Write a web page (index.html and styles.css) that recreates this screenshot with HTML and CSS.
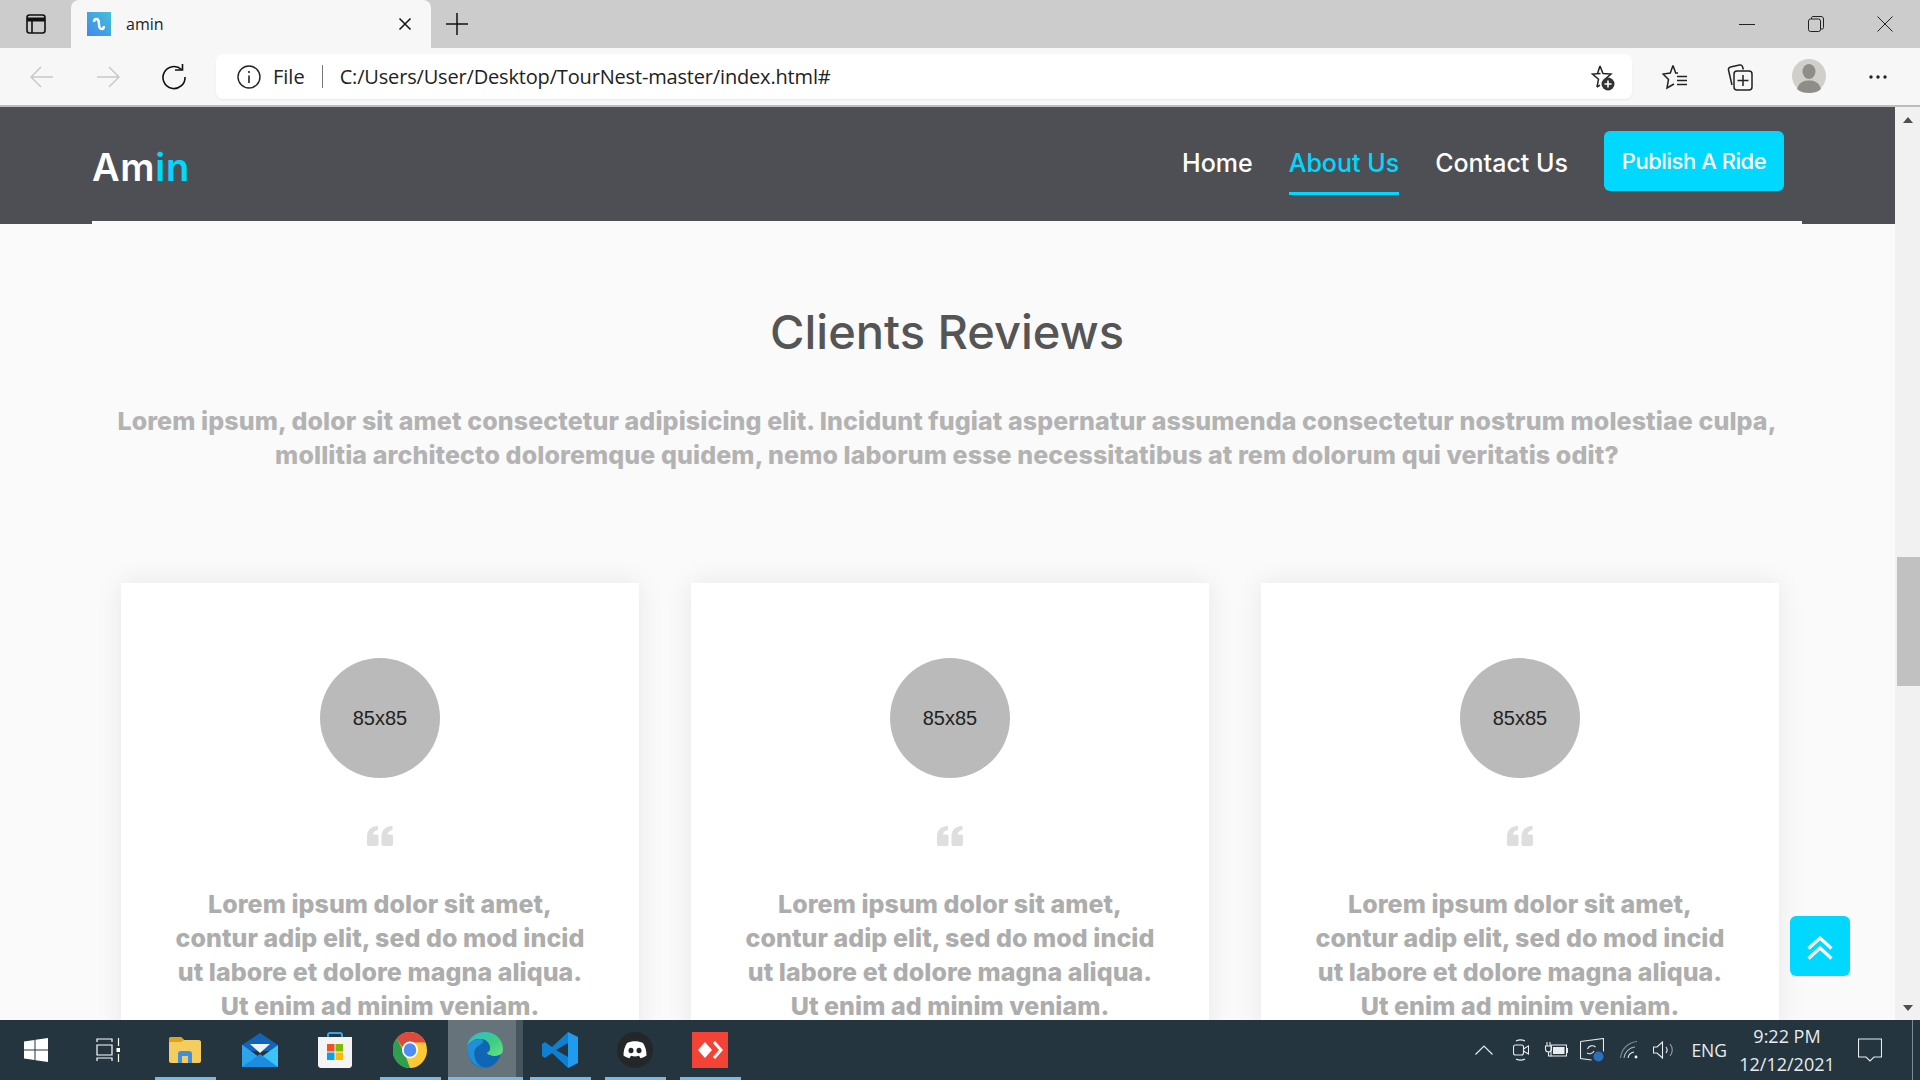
FILE: index.html
```html
<!DOCTYPE html>
<html>
<head>
    <meta charset="utf-8">
    <title>amin</title>
    <link rel="stylesheet" href="styles.css">
</head>
<body>
    <div class="tabbar">
        <div class="tab-side">
            <svg width="20" height="20" viewBox="0 0 20 20" fill="none" stroke="#111" stroke-width="1.6"><rect x="1" y="1" width="18" height="18" rx="2.5"/><path d="M1 5.5h18" stroke-width="4"/><path d="M6 6v13"/></svg>
        </div>
        <div class="tab">
            <svg class="favicon" width="24" height="24" viewBox="0 0 24 24"><defs><linearGradient id="fav" x1="1" y1="0" x2="0" y2="1"><stop offset="0" stop-color="#45c1d6"/><stop offset="1" stop-color="#4287ee"/></linearGradient></defs><rect width="24" height="24" fill="url(#fav)"/><path d="M7 10c0-4 4.500-4 4.800 0l.4 4c.3 4 4.800 4 4.800 0" fill="none" stroke="#fff" stroke-width="2.400"/></svg>
            <span class="tab-title">amin</span>
            <svg class="tab-close" width="14" height="14" viewBox="0 0 14 14" stroke="#111" stroke-width="1.500"><path d="M1.500 1.500l11 11M12.500 1.500l-11 11"/></svg>
        </div>
        <svg class="tab-new" width="22" height="22" viewBox="0 0 22 22" stroke="#111" stroke-width="1.500"><path d="M11 0v22M0 11h22"/></svg>
        <div class="win-controls">
            <svg width="16" height="16" viewBox="0 0 16 16" stroke="#222" stroke-width="1"><path d="M0 8.500h16"/></svg>
            <svg width="16" height="16" viewBox="0 0 16 16" fill="none" stroke="#222" stroke-width="1"><rect x=".5" y="3" width="12" height="12.500" rx="2"/><path d="M3.500 3V2c0-1 .7-1.500 1.500-1.500h8c1.400 0 2.500 1 2.500 2.500v8.500c0 1-.5 1.500-1.500 1.500h-1"/></svg>
            <svg width="16" height="16" viewBox="0 0 16 16" stroke="#222" stroke-width="1"><path d="M.5.500l15 15M15.500.500l-15 15"/></svg>
        </div>
    </div>

    <div class="toolbar">
        <svg class="tool-back" width="24" height="24" viewBox="0 0 24 24" fill="none" stroke="#c9c9c9" stroke-width="1.500"><path d="M1 12h22M11 2L1 12l10 10"/></svg>
        <svg class="tool-forward" width="24" height="24" viewBox="0 0 24 24" fill="none" stroke="#c9c9c9" stroke-width="1.500"><path d="M1 12h22M13 2l10 10-10 10"/></svg>
        <svg class="tool-reload" width="26" height="26" viewBox="0 0 26 26" fill="none" stroke="#111" stroke-width="1.600"><path d="M20.500 5.500A11 11 0 1 0 24 13"/><path d="M14 6h7.500V-1"/></svg>
        <div class="address">
            <svg width="24" height="24" viewBox="0 0 24 24" fill="none" stroke="#222" stroke-width="1.400"><circle cx="12" cy="12" r="11"/><path d="M12 10.500v7.500" stroke-width="1.600"/><circle cx="12" cy="7" r="1.100" fill="#222" stroke="none"/></svg>
            <span class="addr-file">File</span>
            <span class="addr-sep"></span>
            <span class="addr-url">C:/Users/User/Desktop/TourNest-master/index.html#</span>
            <svg class="addr-star" width="28" height="28" viewBox="0 0 28 28" fill="none" stroke="#222" stroke-width="1.500"><path d="M12 3l3 7.500 8 .6-6 5.200 1 4M9 24l1.500-7.700-6-5.200 8-.6"/><path d="M12 3L9.500 10.500M9 24l3-1.800"/><circle cx="20" cy="21" r="6.500" fill="#333" stroke="none"/><path d="M20 17.500v7M16.500 21h7" stroke="#fff" stroke-width="1.600"/></svg>
        </div>
        <div class="tool-icons">
            <svg width="26" height="28" viewBox="0 0 26 28" fill="none" stroke="#222" stroke-width="1.500"><path d="M11 2.500l2.700 7.500H16M11 2.500L8.300 10 1 11l5.500 5.500L5 25l7-4"/><path d="M15 13.500h10M15 17.500h10M15 21.500h10"/></svg>
            <svg width="26" height="30" viewBox="0 0 26 30" fill="none" stroke="#222" stroke-width="1.500"><path d="M5 23L1.500 8c-.3-1.500.5-2.500 2-3l9-2c1.500-.3 2.500.3 3 1.500l.8 3"/><rect x="7" y="9" width="18" height="19" rx="3"/><path d="M16 13v11M10.500 18.500h11"/></svg>
            <svg class="tool-avatar" width="34" height="34" viewBox="0 0 34 34"><circle cx="17" cy="17" r="17" fill="#d0cfca"/><ellipse cx="17" cy="12.500" rx="6.500" ry="7.500" fill="#8f8d89"/><path d="M5 30c2-7 7-8.500 12-8.500S27 23 29 30c-3 3-8 4-12 4s-9-1-12-4z" fill="#8f8d89"/></svg>
            <svg width="20" height="6" viewBox="0 0 20 6" fill="#222"><circle cx="3" cy="3" r="1.700"/><circle cx="10" cy="3" r="1.700"/><circle cx="17" cy="3" r="1.700"/></svg>
        </div>
    </div>

    <div class="viewport">
        <div class="page">
            <header class="site-header">
                <a class="logo">Am<span>in</span></a>
                <nav class="nav">
                    <a class="nav-link">Home</a>
                    <a class="nav-link active">About Us</a>
                    <a class="nav-link">Contact Us</a>
                    <a class="nav-btn">Publish A Ride</a>
                </nav>
            </header>

            <section class="reviews">
                <h2>Clients Reviews</h2>
                <p class="reviews-lead">Lorem ipsum, dolor sit amet consectetur adipisicing elit. Incidunt fugiat aspernatur assumenda consectetur nostrum molestiae culpa,<br>mollitia architecto doloremque quidem, nemo laborum esse necessitatibus at rem dolorum qui veritatis odit?</p>

                <div class="cards">
                    <div class="card">
                        <div class="avatar">85x85</div>
                        <svg class="quote" width="26" height="20" viewBox="0 0 26 20" fill="#dedede"><path d="M0 10.500C0 5 3 1 9.500 0L11 0v4C8 4.500 6.500 6 6 8.500h3.500c1.300 0 2 .7 2 2V18c0 1.300-.7 2-2 2H2c-1.300 0-2-.7-2-2z"/><path d="M14.500 10.500c0-5.500 3-9.500 9.500-10.500l1.500 0v4c-3 .5-4.500 2-5 4.500H24c1.300 0 2 .7 2 2V18c0 1.300-.7 2-2 2h-7.500c-1.300 0-2-.7-2-2z"/></svg>
                        <p>Lorem ipsum dolor sit amet,<br>contur adip elit, sed do mod incid<br>ut labore et dolore magna aliqua.<br>Ut enim ad minim veniam.</p>
                    </div>
                    <div class="card">
                        <div class="avatar">85x85</div>
                        <svg class="quote" width="26" height="20" viewBox="0 0 26 20" fill="#dedede"><path d="M0 10.500C0 5 3 1 9.500 0L11 0v4C8 4.500 6.500 6 6 8.500h3.500c1.300 0 2 .7 2 2V18c0 1.300-.7 2-2 2H2c-1.300 0-2-.7-2-2z"/><path d="M14.500 10.500c0-5.500 3-9.500 9.500-10.500l1.500 0v4c-3 .5-4.500 2-5 4.500H24c1.300 0 2 .7 2 2V18c0 1.300-.7 2-2 2h-7.500c-1.300 0-2-.7-2-2z"/></svg>
                        <p>Lorem ipsum dolor sit amet,<br>contur adip elit, sed do mod incid<br>ut labore et dolore magna aliqua.<br>Ut enim ad minim veniam.</p>
                    </div>
                    <div class="card">
                        <div class="avatar">85x85</div>
                        <svg class="quote" width="26" height="20" viewBox="0 0 26 20" fill="#dedede"><path d="M0 10.500C0 5 3 1 9.500 0L11 0v4C8 4.500 6.500 6 6 8.500h3.500c1.300 0 2 .7 2 2V18c0 1.300-.7 2-2 2H2c-1.300 0-2-.7-2-2z"/><path d="M14.500 10.500c0-5.500 3-9.500 9.500-10.500l1.500 0v4c-3 .5-4.500 2-5 4.500H24c1.300 0 2 .7 2 2V18c0 1.300-.7 2-2 2h-7.500c-1.300 0-2-.7-2-2z"/></svg>
                        <p>Lorem ipsum dolor sit amet,<br>contur adip elit, sed do mod incid<br>ut labore et dolore magna aliqua.<br>Ut enim ad minim veniam.</p>
                    </div>
                </div>
            </section>

            <a class="to-top">
                <svg width="26" height="24" viewBox="0 0 26 24" fill="none" stroke="#fff" stroke-width="3.200"><path d="M1.500 12.500L13 2l11.500 10.500M1.500 22.500L13 12l11.500 10.500"/></svg>
            </a>
        </div>
        <div class="scrollbar">
            <span class="arrow-up"></span>
            <div class="scroll-track"><div class="scroll-thumb"></div></div>
            <span class="arrow-down"></span>
        </div>
    </div>

    <div class="taskbar">
        <div class="task-sys">
            <svg width="24" height="24" viewBox="0 0 24 24" fill="#fff"><path d="M0 3.500l10.500-1.500v9.500H0zM11.500 1.800L24 0v11.500H11.500zM0 12.500h10.500V22L0 20.500zM11.500 12.500H24V24l-12.500-1.800z"/></svg>
        </div>
        <div class="task-sys">
            <svg width="24" height="24" viewBox="0 0 24 24" fill="none" stroke="#fff" stroke-width="1.200"><path d="M1 4V1h15v3M1 7h15v10H1zM1 23v-3h15v3M22.500 0v8M22.500 16v8"/><rect x="20.500" y="10" width="3.500" height="4" fill="#fff" stroke="none"/></svg>
        </div>
        <div class="task-app running">
            <svg width="32" height="26" viewBox="0 0 32 26"><path d="M0 2c0-1 1-2 2-2h10l3 3h15c1 0 2 1 2 2v19c0 1-1 2-2 2H2c-1 0-2-1-2-2z" fill="#f5cd5f"/><path d="M0 2c0-1 1-2 2-2h10l3 3-3 2H0z" fill="#e0a21c"/><path d="M9 26V17c0-2 1-3 3-3h8c2 0 3 1 3 3v9h-4v-7h-6v7z" fill="#3f8fdc"/></svg>
        </div>
        <div class="task-app">
            <svg width="36" height="34" viewBox="0 0 36 34"><path d="M0 12L18 0l18 12v6H0z" fill="#1065b8"/><path d="M8 11h20l-10 9z" fill="#eef2f5"/><path d="M36 12v22H0V12l18 13z" fill="#3cc4f5"/><path d="M0 12l18 13-18 9z" fill="#2ca5ee"/><path d="M0 34l18-13 18 13z" fill="#1b8ce0"/></svg>
        </div>
        <div class="task-app">
            <svg width="36" height="36" viewBox="0 0 36 36"><path d="M11 6V3c0-1 1-2 2-2h10c1 0 2 1 2 2v3" fill="none" stroke="#3aa3e3" stroke-width="2"/><path d="M1 5h34v28c0 1.500-1 3-3 3H4c-2 0-3-1.500-3-3z" fill="#f4f4f4"/><rect x="10" y="12" width="7.500" height="7.500" fill="#f25022"/><rect x="18.500" y="12" width="7.500" height="7.500" fill="#7fba00"/><rect x="10" y="20.500" width="7.500" height="7.500" fill="#00a4ef"/><rect x="18.500" y="20.500" width="7.500" height="7.500" fill="#ffb900"/></svg>
        </div>
        <div class="task-app running">
            <svg width="34" height="36" viewBox="0 0 34 34" preserveAspectRatio="none"><circle cx="17" cy="17" r="17" fill="#fcc934"/><path d="M17 0a17 17 0 0 1 15.500 10H17a7 7 0 0 0-6.800 5.500L3.500 6A17 17 0 0 1 17 0z" fill="#dd4a3d"/><path d="M3.500 6l8 13.500L17 34A17 17 0 0 1 3.500 6z" fill="#2f9e4f"/><circle cx="17" cy="17" r="8" fill="#fff"/><circle cx="17" cy="17" r="6.300" fill="#4f8df5"/></svg>
        </div>
        <div class="task-app active">
            <svg width="36" height="36" viewBox="0 0 36 36"><defs><linearGradient id="edge" x1="0" y1="0" x2="1" y2="1"><stop offset="0" stop-color="#2fb8dc"/><stop offset=".6" stop-color="#3fd07c"/><stop offset="1" stop-color="#6ce08a"/></linearGradient></defs><path d="M18 0c10 0 18 7 18 17 0 5-4 7-8 7-5 0-8-2-8-3 0-1 3-1 3-5 0-5-4-9-10-9C7 7 2 10 0 15 1 6 9 0 18 0z" fill="url(#edge)"/><path d="M0 15c2-5 7-8 13-8 6 0 10 4 10 9 0 4-3 4-3 5 0 1 3 3 8 3 3 0 5-1 6-2-3 9-10 14-17 14C8 36 0 28 0 15z" fill="#0f66b4"/><path d="M13 13c-5 2-7 7-5 13 1 5 5 9 11 10C9 36 0 28 0 15c2-5 7-8 13-8 2 0 6 2 0 6z" fill="#1f8fd8"/></svg>
            <span class="task-split"></span>
        </div>
        <div class="task-app running">
            <svg width="36" height="36" viewBox="0 0 36 36"><path d="M26 0l10 5v26l-10 5z" fill="#1f9cf0"/><path d="M26 0L10 15 3 10 0 12v12l3 2 7-5 16 15V25L14 18l12-7z" fill="#0f7fcf"/></svg>
        </div>
        <div class="task-app running">
            <svg width="36" height="36" viewBox="0 0 36 36"><circle cx="18" cy="18" r="18" fill="#23272a"/><path d="M10 11c5-2.500 11-2.500 16 0 2.500 4 3.500 8 3.500 12.500-2 1.500-4 2.300-6 2.700l-1.500-2.500c-3 1-5 1-8 0l-1.500 2.500c-2-.4-4-1.200-6-2.700C6.500 19 7.500 15 10 11z" fill="#fff"/><ellipse cx="14" cy="18.500" rx="2.500" ry="2.800" fill="#23272a"/><ellipse cx="22" cy="18.500" rx="2.500" ry="2.800" fill="#23272a"/></svg>
        </div>
        <div class="task-app running">
            <svg width="36" height="36" viewBox="0 0 36 36"><rect width="36" height="36" fill="#f44336"/><path d="M13 10l7 8-7 8-7-8z" fill="#fff"/><path d="M22 10l7 8-7 8" fill="none" stroke="#fff" stroke-width="3"/></svg>
        </div>

        <div class="tray">
            <svg class="tray-chevron" width="18" height="10" viewBox="0 0 18 10" fill="none" stroke="#e8ecee" stroke-width="1.200"><path d="M.5 9.500L9 1l8.500 8.500"/></svg>
            <svg class="tray-cam" width="16" height="22" viewBox="0 0 16 22" fill="none" stroke="#e8ecee" stroke-width="1.100"><rect x=".5" y="6" width="10" height="10" rx="2"/><path d="M10.500 10l5-3v8l-5-3M3 2c3-1.500 6-1.500 9 0M3 20c3 1.500 6 1.500 9 0"/></svg>
            <svg class="tray-batt" width="24" height="16" viewBox="0 0 24 16"><path d="M3 0v4M6 0v4M1.500 4h6v3c0 2-1.500 3-3 3s-3-1-3-3zM4.500 10v4h3" fill="none" stroke="#e8ecee" stroke-width="1.100"/><rect x="7" y="3" width="15.500" height="11" fill="none" stroke="#e8ecee"/><rect x="9" y="5" width="11.500" height="7" fill="#e8ecee"/><rect x="22.500" y="6" width="1.500" height="5" fill="#e8ecee"/></svg>
            <svg class="tray-sync" width="24" height="24" viewBox="0 0 24 24" fill="none" stroke="#e8ecee" stroke-width="1.100"><path d="M.5 3.500L23.500.500v13M.5 3.500v17l11 1.500"/><path d="M7.500 11a5 5 0 0 1 8-2M14 13a5 5 0 0 1-7 2"/><circle cx="18.500" cy="18.500" r="5" fill="#2d6fbd" stroke="none"/></svg>
            <svg class="tray-wifi" width="18" height="18" viewBox="0 0 18 18" fill="none" stroke="#aab3b8" stroke-width="1.100"><path d="M.5 17C1.500 8 8 1.500 17 .5" stroke="#7f8a90"/><path d="M4 17c.8-6 5.500-10.500 11-11"/><path d="M8 17c.5-3 3-5.500 6-6" stroke="#e8ecee"/><circle cx="16" cy="16" r="1.400" fill="#fff" stroke="none"/></svg>
            <svg class="tray-sound" width="22" height="18" viewBox="0 0 22 18" fill="none" stroke="#e8ecee" stroke-width="1.100"><path d="M.5 6v6h3.500l5.500 5V1L4 6z"/><path d="M13 6c1.500 2 1.500 4 0 6"/><path d="M17 3c3 3.500 3 8.500 0 12" stroke="#99a3a8"/></svg>
            <span class="tray-lang">ENG</span>
            <div class="tray-clock"><span>9:22 PM</span><span>12/12/2021</span></div>
            <svg class="tray-notify" width="24" height="24" viewBox="0 0 24 24" fill="none" stroke="#e8ecee" stroke-width="1.100"><path d="M.5 1h23v18H16l-4 4-4-4H.5z"/></svg>
        </div>
    </div>
</body>
</html>
```

FILE: styles.css
```css
* {
    margin: 0;
    padding: 0;
    box-sizing: border-box;
}

html, body {
    height: 100%;
    overflow: hidden;
}

body {
    display: flex;
    flex-direction: column;
    font-family: "Open Sans", "Liberation Sans", sans-serif;
    background: #fafafa;
}

/* browser chrome */
.tabbar {
    height: 48px;
    flex: none;
    background: #cccccc;
    display: flex;
    align-items: center;
}

.tab-side {
    width: 71px;
    display: flex;
    justify-content: center;
}

.tab {
    width: 360px;
    height: 48px;
    background: #f7f7f7;
    border-radius: 8px 8px 0 0;
    display: flex;
    align-items: center;
    padding-left: 16px;
}

.tab-title {
    font-size: 16px;
    color: #222;
    margin-left: 15px;
    flex: 1;
}

.tab-close {
    margin-right: 19px;
}

.tab-new {
    margin-left: 15px;
}

.win-controls {
    margin-left: auto;
    display: flex;
    gap: 53px;
    padding-right: 27px;
}

.toolbar {
    height: 59px;
    flex: none;
    background: #f7f7f7;
    border-bottom: 2px solid #bdbdbd;
    display: flex;
    align-items: center;
    padding: 0 32px 0 30px;
}

.tool-back {
    margin-right: 42px;
}

.tool-forward {
    margin-right: 41px;
}

.address {
    width: 1416px;
    height: 45px;
    margin-left: 29px;
    background: #fff;
    border-radius: 7px;
    box-shadow: 0 1px 2px rgba(0, 0, 0, 0.06);
    display: flex;
    align-items: center;
    padding: 0 16px 0 21px;
}

.addr-file {
    font-size: 20px;
    color: #222;
    margin-left: 12px;
}

.addr-sep {
    width: 1px;
    height: 23px;
    background: #777;
    margin: 0 17px;
}

.addr-url {
    font-size: 20px;
    color: #222;
    letter-spacing: -0.17px;
    flex: 1;
}

.tool-icons {
    flex: 1;
    display: flex;
    align-items: center;
    justify-content: space-between;
    padding-left: 30px;
}

.tool-avatar {
    margin: 0 3px 2px 0;
}

/* page */
.viewport {
    flex: 1;
    display: flex;
    min-height: 0;
}

.page {
    flex: 1;
    min-width: 0;
    position: relative;
    overflow: hidden;
    background: #fafafa;
}

.site-header {
    height: 117px;
    background: #4e4f55;
    padding: 0 93px 0 92px;
    display: flex;
    align-items: flex-start;
    justify-content: space-between;
    position: relative;
}

/* the pale strip under the header stops short of both page edges */
.site-header::after {
    content: "";
    position: absolute;
    left: 92px;
    right: 93px;
    bottom: 0;
    height: 3px;
    background: #fafafa;
}

.logo {
    font-family: "Inter", sans-serif;
    font-size: 38px;
    font-weight: 600;
    color: #fff;
    margin-top: 38px;
    line-height: 44px;
    letter-spacing: 0.7px;
}

.logo span {
    color: #00d8ff;
}

.nav {
    display: flex;
    align-items: flex-start;
    padding-right: 18px;
}

.nav-link {
    font-family: "Inter", sans-serif;
    font-size: 25px;
    font-weight: 500;
    color: #fff;
    height: 88px;
    line-height: 36px;
    padding-top: 38px;
    margin-right: 36px;
    border-bottom: 3px solid transparent;
}

.nav-link.active {
    color: #00d8ff;
    border-bottom-color: #00d8ff;
}

.nav-btn {
    font-family: "Inter", sans-serif;
    font-size: 22px;
    font-weight: 500;
    color: #fff;
    background: #00d8ff;
    border-radius: 6px;
    width: 180px;
    height: 60px;
    margin-top: 24px;
    display: flex;
    align-items: center;
    justify-content: center;
    letter-spacing: -0.45px;
}

.reviews {
    padding: 0 116px 0 121px;
    text-align: center;
}

.reviews h2 {
    font-family: "Inter", sans-serif;
    font-size: 47px;
    font-weight: 500;
    color: #555555;
    margin: 78px 6px 0 0;
    line-height: 60px;
}

.reviews-lead {
    font-family: "Inter", sans-serif;
    font-size: 25px;
    font-weight: 800;
    color: #b3b3b3;
    line-height: 34px;
    margin: 42px -17px 0 -23px;
    white-space: nowrap;
    letter-spacing: 0.1px;
}

.cards {
    display: flex;
    justify-content: space-between;
    margin-top: 111px;
}

.card {
    width: 518px;
    height: 600px;
    background: #fff;
    box-shadow: 0 0 25px rgba(0, 0, 0, 0.08);
    display: flex;
    flex-direction: column;
    align-items: center;
    padding-top: 75px;
}

.avatar {
    width: 120px;
    height: 120px;
    border-radius: 50%;
    background: #bababa;
    color: #222;
    font-family: "Liberation Sans", Arial, sans-serif;
    font-size: 20px;
    display: flex;
    align-items: center;
    justify-content: center;
}

.quote {
    margin-top: 48px;
}

.card p {
    font-family: "Inter", sans-serif;
    font-size: 25px;
    font-weight: 800;
    color: #adadad;
    line-height: 34px;
    text-align: center;
    margin-top: 41px;
    white-space: nowrap;
    letter-spacing: 0.05px;
}

.to-top {
    position: absolute;
    left: 1790px;
    top: 809px;
    width: 60px;
    height: 60px;
    background: #00d8ff;
    border-radius: 6px;
    display: flex;
    align-items: center;
    justify-content: center;
    padding-top: 3px;
}

.scrollbar {
    width: 25px;
    flex: none;
    background: #f1f1f1;
    display: flex;
    flex-direction: column;
    align-items: center;
}

.arrow-up, .arrow-down {
    width: 0;
    height: 0;
    border-left: 5px solid transparent;
    border-right: 5px solid transparent;
    flex: none;
}

.arrow-up {
    border-bottom: 6px solid #505050;
    margin-top: 10px;
}

.arrow-down {
    border-top: 6px solid #505050;
    margin-bottom: 9px;
}

.scroll-track {
    flex: 1;
    width: 100%;
    position: relative;
}

.scroll-thumb {
    position: absolute;
    top: 434px;
    left: 2px;
    right: 0;
    height: 129px;
    background: #c1c1c1;
}

/* windows taskbar */
.taskbar {
    height: 60px;
    flex: none;
    background: #24353f;
    display: flex;
    align-items: center;
    color: #e8ecee;
}

.task-sys {
    width: 72px;
    height: 60px;
    display: flex;
    align-items: center;
    justify-content: center;
    flex: none;
}

.task-app {
    width: 75px;
    height: 60px;
    flex: none;
    display: flex;
    align-items: center;
    justify-content: center;
    position: relative;
}

.task-sys + .task-app {
    margin-left: 4px;
}

.task-app svg {
    margin-left: -2px;
}

.task-app.running::after,
.task-app.active::after {
    content: "";
    position: absolute;
    left: 7px;
    right: 7px;
    bottom: 0;
    height: 3px;
    background: #76b9ed;
}

.task-app.active {
    background: #66737b;
}

.task-app.active::after {
    left: 0;
    right: 0;
}

.task-split {
    position: absolute;
    right: 0;
    top: 0;
    bottom: 0;
    width: 7px;
    background: rgba(36, 53, 63, 0.5);
}

.tray {
    margin-left: auto;
    display: flex;
    align-items: center;
    height: 60px;
    padding-right: 38px;
    position: relative;
}

.tray-chevron { margin-right: 20px; }
.tray-cam { margin-right: 15px; }
.tray-batt { margin-right: 12px; }
.tray-sync { margin-right: 16px; }
.tray-wifi { margin-right: 15px; }
.tray-sound { margin-right: 16px; }

.tray-lang {
    font-size: 17.5px;
    margin-right: 1px;
}

.tray-clock {
    width: 118px;
    display: flex;
    flex-direction: column;
    align-items: center;
    font-size: 18px;
    line-height: 28px;
    margin-right: 12px;
}

.tray::after {
    content: "";
    position: absolute;
    right: 7px;
    top: 0;
    bottom: 0;
    width: 1px;
    background: #7d8b94;
}
```
